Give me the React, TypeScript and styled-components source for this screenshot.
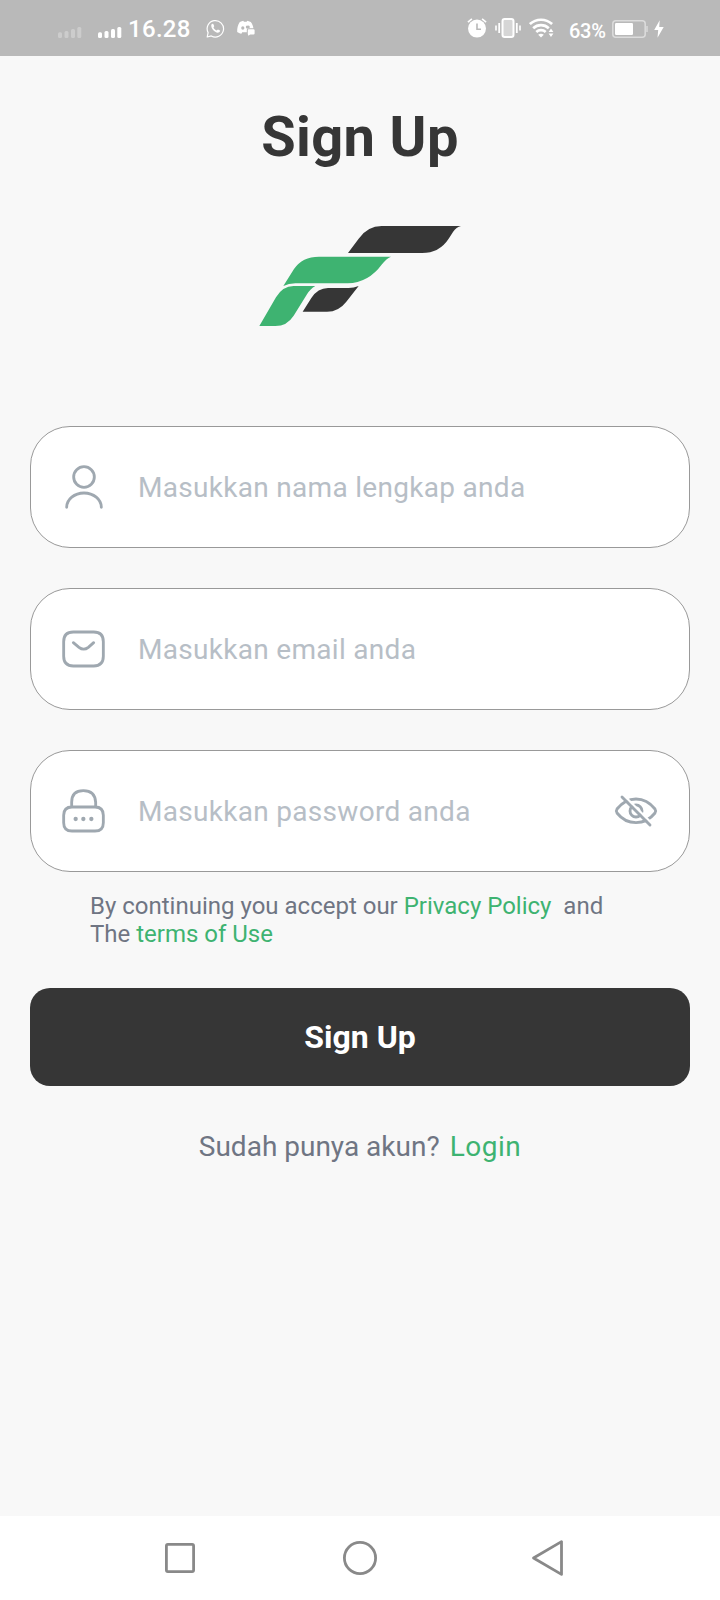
import React from 'react';
import styled, { createGlobalStyle } from 'styled-components';

const GlobalStyle = createGlobalStyle`
  * { box-sizing: border-box; }
  body { margin: 0; background: #f8f8f8; font-family: Roboto, sans-serif; }
  svg { display: block; flex: none; }
`;

const Screen = styled.div`
  width: 720px;
  height: 1600px;
  display: flex;
  flex-direction: column;
  background: #f8f8f8;
  overflow: hidden;
`;

const StatusBar = styled.header`
  height: 56px;
  flex: none;
  display: flex;
  justify-content: space-between;
  align-items: center;
  padding: 0 56px 0 58px;
  background: #b9b9b9;
  color: #fff;
`;

const StatusGroup = styled.div`
  display: flex;
  align-items: center;
  height: 56px;
`;

const Slot = styled.span<{ $left?: number; $top?: number }>`
  margin-left: ${(p) => p.$left ?? 0}px;
  margin-top: ${(p) => p.$top ?? 0}px;
`;

const Clock = styled.span`
  margin: 2px 0 0 6px;
  width: 64px;
  font-size: 24px;
  line-height: 28px;
  font-weight: 500;
  letter-spacing: 0.3px;
  white-space: nowrap;
`;

const BatteryText = styled.span`
  margin: 6px 0 0 15px;
  width: 38px;
  font-size: 20px;
  line-height: 24px;
  font-weight: 500;
  letter-spacing: -0.3px;
  white-space: nowrap;
`;

const Main = styled.main`
  flex: 1;
  display: flex;
  flex-direction: column;
  align-items: center;
  padding: 0 30px;
`;

const Title = styled.h1`
  margin: 48px 0 0;
  font-size: 56px;
  line-height: 66px;
  font-weight: 700;
  letter-spacing: 0.35px;
  color: #363636;
`;

const LogoWrap = styled.div`
  margin: 55px 0 99px;
`;

const Fields = styled.form`
  width: 100%;
  display: flex;
  flex-direction: column;
  gap: 40px;
`;

const Field = styled.label`
  height: 122px;
  display: flex;
  align-items: center;
  padding: 0 29px;
  border: 1px solid #999;
  border-radius: 40px;
  background: #fff;
`;

const Input = styled.input`
  flex: 1;
  min-width: 0;
  margin-left: 30px;
  padding: 2px 0 0;
  border: 0;
  outline: 0;
  background: transparent;
  font: 400 28px/34px Roboto, sans-serif;
  letter-spacing: 0.3px;
  color: #363636;
  &::placeholder { color: #b7bec6; opacity: 1; }
`;

const Terms = styled.p`
  align-self: stretch;
  margin: 20px 60px 0;
  font-size: 24px;
  line-height: 28px;
  color: #6f7583;
  white-space: pre;
`;

const Green = styled.span`
  color: #3eb371;
`;

const Submit = styled.button`
  width: 100%;
  height: 98px;
  margin-top: 40px;
  padding: 0;
  border: 0;
  border-radius: 20px;
  background: #363636;
  color: #fff;
  font: 700 32px/38px Roboto, sans-serif;
`;

const Footer = styled.p`
  display: flex;
  gap: 10px;
  margin: 44px 0 0;
  font-size: 28px;
  line-height: 34px;
  color: #6f7583;
`;

const LoginLink = styled(Green)`
  letter-spacing: 0.5px;
`;

const NavBar = styled.nav`
  height: 84px;
  flex: none;
  display: grid;
  grid-template-columns: 180px 180px 196px;
  justify-content: start;
  justify-items: center;
  align-items: center;
  padding-left: 90px;
  background: #fff;
`;

const Signal = ({ opacity = 1 }: { opacity?: number }) => (
  <svg width="24" height="12" viewBox="0 0 24 12" fill="#fff" opacity={opacity}>
    <rect x="0" y="6.3" width="4" height="5.7" rx="1.5" />
    <rect x="6.5" y="5" width="4" height="7" rx="1.5" />
    <rect x="13" y="3" width="4" height="9" rx="1.5" />
    <rect x="19.3" y="0.9" width="4" height="11.1" rx="1.5" />
  </svg>
);

const WhatsApp = () => (
  <svg width="19" height="19" viewBox="0 0 19 19" fill="none" stroke="#fff" strokeWidth="1.2">
    <path d="M1.2 18 2.1 13.6A8.2 8.2 0 1 1 5.3 16.9Z" strokeLinejoin="round" />
    <path d="M5.3 5.8C5.9 4.6 6.9 4.3 7.3 5L8.2 7C8.4 7.5 7.6 8 7.5 8.4C8 9.8 9.3 10.9 10.6 11.4C11.1 11.2 11.5 10.3 12 10.4L14 11.5C14.5 12 13.6 13.3 12.5 13.6C9 14.2 4.7 9.5 5.3 5.8Z" fill="#fff" stroke="none" />
  </svg>
);

const Discord = () => (
  <svg width="18" height="16" viewBox="0 0 18 16" fill="#fff">
    <path fillRule="evenodd" d="M2.8 2 6.2.7 7 1.8H9.6L10.4.7 13.8 2C15.4 4.2 16.2 6.2 16.4 8.2H11.2Q10 8.4 9.8 9.8V12.3H5.2L4.4 13.8C2.8 13.5 1.2 12.8.2 12 0 8.2.8 5 2.8 2ZM5.8 6.2A1.6 1.8 0 1 0 5.8 9.8 1.6 1.8 0 1 0 5.8 6.2ZM10.8 5.8A1.3 1.4 0 1 0 10.8 8.2 1.3 1.4 0 1 0 10.8 5.8Z" />
    <path d="M11.6 9.2H16.4Q17.6 9.2 17.6 10.3V13.4Q17.6 14.5 16.4 14.5H13.2L11.4 15.8 10.8 14V10.3Q10.8 9.2 11.6 9.2Z" />
  </svg>
);

const Alarm = () => (
  <svg width="20" height="20" viewBox="0 0 20 20" fill="none">
    <circle cx="10" cy="10.6" r="9" fill="#fff" />
    <path d="M.9 4.2 4.9.9M19.1 4.2 15.1.9" stroke="#fff" strokeWidth="1.6" />
    <path d="M10 5.6V11.3H14" stroke="#b9b9b9" strokeWidth="1.6" />
  </svg>
);

const Vibrate = () => (
  <svg width="26" height="20" viewBox="0 0 26 20" fill="none" stroke="#fff">
    <rect x="7.5" y="1" width="11" height="18" rx="2.2" fill="#d6d6d6" strokeWidth="2" />
    <path d="M4.2 5V15M21.8 5V15" strokeWidth="1.8" />
    <path d="M1 7.5V12.5M25 7.5V12.5" strokeWidth="1.6" />
  </svg>
);

const Wifi = () => (
  <svg width="25" height="20" viewBox="0 0 25 20" fill="none" stroke="#fff" strokeWidth="2.7">
    <path d="M.9 6.1A16.3 16.3 0 0 1 23.1 6.1" />
    <path d="M4.2 10.2A11.4 11.4 0 0 1 19.8 10.2" />
    <path d="M7.3 14A7 7 0 0 1 16.7 14" />
    <path d="M9.2 16.8Q12 14.8 14.8 16.8L12 19.6Z" fill="#fff" stroke="none" />
    <path d="M19.6 14 22 10.5 24.4 14ZM19.6 15.6 22 19.1 24.4 15.6Z" fill="#fff" stroke="none" />
  </svg>
);

const Battery = () => (
  <svg width="36" height="18" viewBox="0 0 36 18" fill="none">
    <rect x=".8" y=".8" width="32.4" height="16.4" rx="3" stroke="#dcdcdc" strokeWidth="1.5" />
    <rect x="3" y="3" width="18" height="12" rx="1.2" fill="#fff" />
    <path d="M35 6V12" stroke="#dcdcdc" strokeWidth="1.4" />
  </svg>
);

const Bolt = () => (
  <svg width="10" height="18" viewBox="0 0 10 18" fill="#fff">
    <path d="M5.7.2.2 10.1H4.2L3.5 17.8 9.7 7H5.2Z" />
  </svg>
);

const Logo = () => (
  <svg width="204" height="102" viewBox="53 405 612 306">
    <g fill="#363636">
      <path d="M323 489 355 446Q382 408 424 408H662Q648 411 638 426L625 446Q597 489 545 489Z" />
      <path d="M187 665 213 624Q233 593 265 594H325Q340 594 355 588L318 635Q295 665 260 665Z" />
    </g>
    <g fill="#3eb371">
      <path d="M129 588 161 537Q186 500 236 500H452Q440 504 425 523 384 579 322 580H165Q145 580 129 588Z" />
      <path d="M57 708 107 622Q127 588 160 588H225Q210 596 200 613L160 677Q140 708 105 708Z" />
    </g>
  </svg>
);

const FieldIcon = ({ viewBox, children }: { viewBox: string; children: React.ReactNode }) => (
  <svg width="48" height="48" viewBox={viewBox} fill="none" stroke="#9fa8b0" strokeWidth="8.5" strokeLinecap="round" strokeLinejoin="round">
    {children}
  </svg>
);

const UserIcon = () => (
  <FieldIcon viewBox="120 144 144 144">
    <circle cx="192" cy="186" r="31" />
    <path d="M140 277A52 43 0 0 1 244 277" />
  </FieldIcon>
);

const MailIcon = () => (
  <FieldIcon viewBox="120 135 144 144">
    <path d="M160 156H221Q250 156 250 185V229Q250 258 221 258H160Q131 258 131 229V185Q131 156 160 156Z" />
    <path d="M160 188 177 202Q191 213 205 202L221 188" />
  </FieldIcon>
);

const LockIcon = () => (
  <FieldIcon viewBox="120 141 144 144">
    <path d="M155 201V187Q155 152 190 152T227 187V201M156 201H225Q250 201 250 226V248Q250 273 225 273H156Q131 273 131 248V226Q131 201 156 201Z" />
    <g fill="#9fa8b0" stroke="none">
      <circle cx="167" cy="237" r="6.5" />
      <circle cx="190" cy="237" r="6.5" />
      <circle cx="214" cy="237" r="6.5" />
    </g>
  </FieldIcon>
);

const EyeOffIcon = () => (
  <FieldIcon viewBox="96 141 144 144">
    <path d="M111 207Q135 177 168 177T225 207Q229 213 225 219 202 248 168 248T111 219Q107 213 111 207Z" />
    <circle cx="168" cy="213" r="18" />
    <path d="M132 167 216 251" stroke="#fff" strokeWidth="7" strokeLinecap="butt" />
    <path d="M126 171 210 255" />
  </FieldIcon>
);

const NavIcon = ({ children }: { children: React.ReactNode }) => (
  <svg width="38" height="38" viewBox="0 0 38 38" fill="none" stroke="#898989" strokeWidth="2.8" strokeLinejoin="round">
    {children}
  </svg>
);

export default function App() {
  return (
    <Screen>
      <GlobalStyle />
      <StatusBar>
        <StatusGroup>
          <Slot $top={8}><Signal opacity={0.28} /></Slot>
          <Slot $left={16} $top={8}><Signal /></Slot>
          <Clock>16.28</Clock>
          <Slot $left={14}><WhatsApp /></Slot>
          <Slot $left={12}><Discord /></Slot>
        </StatusGroup>
        <StatusGroup>
          <Slot><Alarm /></Slot>
          <Slot $left={8}><Vibrate /></Slot>
          <Slot $left={8}><Wifi /></Slot>
          <BatteryText>63%</BatteryText>
          <Slot $left={5} $top={2}><Battery /></Slot>
          <Slot $left={6} $top={2}><Bolt /></Slot>
        </StatusGroup>
      </StatusBar>
      <Main>
        <Title>Sign Up</Title>
        <LogoWrap><Logo /></LogoWrap>
        <Fields>
          <Field><UserIcon /><Input placeholder="Masukkan nama lengkap anda" /></Field>
          <Field><MailIcon /><Input placeholder="Masukkan email anda" /></Field>
          <Field><LockIcon /><Input type="password" placeholder="Masukkan password anda" /><EyeOffIcon /></Field>
        </Fields>
        <Terms>
          By continuing you accept our <Green>Privacy Policy</Green>{'  and\nThe '}<Green>terms of Use</Green>
        </Terms>
        <Submit type="button">Sign Up</Submit>
        <Footer>Sudah punya akun? <LoginLink>Login</LoginLink></Footer>
      </Main>
      <NavBar>
        <NavIcon><rect x="5.4" y="5.4" width="27.2" height="27.2" rx="1.5" /></NavIcon>
        <NavIcon><circle cx="19" cy="19" r="15.6" /></NavIcon>
        <NavIcon><path d="M32.5 2.6V35.4L4.5 19Z" /></NavIcon>
      </NavBar>
    </Screen>
  );
}
